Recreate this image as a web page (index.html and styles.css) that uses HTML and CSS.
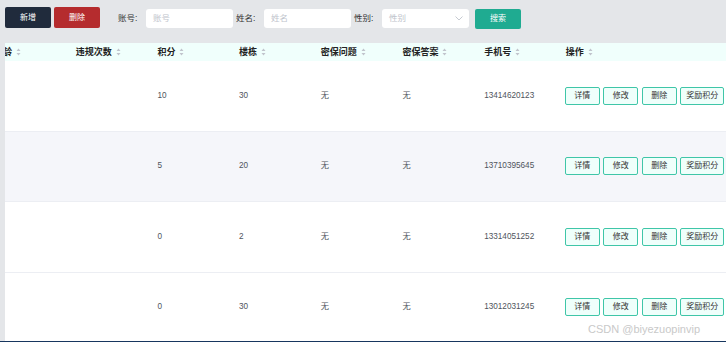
FILE: index.html
```html
<!DOCTYPE html>
<html lang="zh-CN">
<head>
<meta charset="utf-8">
<title>用户管理</title>
<link rel="stylesheet" href="styles.css">
</head>
<body>
<div class="page">
  <div class="toolbar">
    <button class="btn btn-dark">新增</button>
    <button class="btn btn-red">删除</button>
    <label class="field-label first">账号:</label>
    <div class="input"><span class="ph">账号</span></div>
    <label class="field-label">姓名:</label>
    <div class="input"><span class="ph">姓名</span></div>
    <label class="field-label">性别:</label>
    <div class="input select"><span class="ph">性别</span>
      <svg class="chev" width="8" height="5" viewBox="0 0 8 5"><path d="M0.5 0.5 L4 4 L7.5 0.5" fill="none" stroke="#c0c4cc" stroke-width="0.9"/></svg>
    </div>
    <button class="btn btn-teal">搜索</button>
  </div>

  <div class="table-wrap">
    <div class="table">
      <div class="row head">
        <div class="cell">年龄<svg class="sort" width="5" height="8" viewBox="0 0 5 8"><path d="M2.5 0.5 L4.5 3 L0.5 3 Z M2.5 7.5 L4.5 5 L0.5 5 Z" fill="#c0c4cc"/></svg></div>
        <div class="cell">违规次数<svg class="sort" width="5" height="8" viewBox="0 0 5 8"><path d="M2.5 0.5 L4.5 3 L0.5 3 Z M2.5 7.5 L4.5 5 L0.5 5 Z" fill="#c0c4cc"/></svg></div>
        <div class="cell">积分<svg class="sort" width="5" height="8" viewBox="0 0 5 8"><path d="M2.5 0.5 L4.5 3 L0.5 3 Z M2.5 7.5 L4.5 5 L0.5 5 Z" fill="#c0c4cc"/></svg></div>
        <div class="cell">楼栋<svg class="sort" width="5" height="8" viewBox="0 0 5 8"><path d="M2.5 0.5 L4.5 3 L0.5 3 Z M2.5 7.5 L4.5 5 L0.5 5 Z" fill="#c0c4cc"/></svg></div>
        <div class="cell">密保问题<svg class="sort" width="5" height="8" viewBox="0 0 5 8"><path d="M2.5 0.5 L4.5 3 L0.5 3 Z M2.5 7.5 L4.5 5 L0.5 5 Z" fill="#c0c4cc"/></svg></div>
        <div class="cell">密保答案<svg class="sort" width="5" height="8" viewBox="0 0 5 8"><path d="M2.5 0.5 L4.5 3 L0.5 3 Z M2.5 7.5 L4.5 5 L0.5 5 Z" fill="#c0c4cc"/></svg></div>
        <div class="cell">手机号<svg class="sort" width="5" height="8" viewBox="0 0 5 8"><path d="M2.5 0.5 L4.5 3 L0.5 3 Z M2.5 7.5 L4.5 5 L0.5 5 Z" fill="#c0c4cc"/></svg></div>
        <div class="cell">操作<svg class="sort" width="5" height="8" viewBox="0 0 5 8"><path d="M2.5 0.5 L4.5 3 L0.5 3 Z M2.5 7.5 L4.5 5 L0.5 5 Z" fill="#c0c4cc"/></svg></div>
      </div>

      <div class="row">
        <div class="cell"></div><div class="cell"></div>
        <div class="cell">10</div><div class="cell">30</div>
        <div class="cell">无</div><div class="cell">无</div>
        <div class="cell">13414620123</div>
        <div class="cell ops"><span class="op">详情</span><span class="op">修改</span><span class="op">删除</span><span class="op wide">奖励积分</span></div>
      </div>
      <div class="row alt">
        <div class="cell"></div><div class="cell"></div>
        <div class="cell">5</div><div class="cell">20</div>
        <div class="cell">无</div><div class="cell">无</div>
        <div class="cell">13710395645</div>
        <div class="cell ops"><span class="op">详情</span><span class="op">修改</span><span class="op">删除</span><span class="op wide">奖励积分</span></div>
      </div>
      <div class="row">
        <div class="cell"></div><div class="cell"></div>
        <div class="cell">0</div><div class="cell">2</div>
        <div class="cell">无</div><div class="cell">无</div>
        <div class="cell">13314051252</div>
        <div class="cell ops"><span class="op">详情</span><span class="op">修改</span><span class="op">删除</span><span class="op wide">奖励积分</span></div>
      </div>
      <div class="row">
        <div class="cell"></div><div class="cell"></div>
        <div class="cell">0</div><div class="cell">30</div>
        <div class="cell">无</div><div class="cell">无</div>
        <div class="cell">13012031245</div>
        <div class="cell ops"><span class="op">详情</span><span class="op">修改</span><span class="op">删除</span><span class="op wide">奖励积分</span></div>
      </div>
    </div>
  </div>

  <div class="watermark">CSDN @biyezuopinvip</div>
</div>
</body>
</html>
```

FILE: styles.css
```css
* { box-sizing: border-box; }

html, body {
  margin: 0;
  padding: 0;
}

body {
  font-family: "Liberation Sans", "Noto Sans CJK SC", sans-serif;
  color: #333;
}

.page {
  position: relative;
  width: 726px;
  height: 342px;
  overflow: hidden;
  background: #e4e6e9;
  border-bottom: 1px solid #17365f;
}

/* toolbar */
.toolbar {
  height: 43px;
  display: flex;
  align-items: flex-start;
  padding: 7px 0 0 5px;
}

.btn {
  border: none;
  border-radius: 2px;
  color: #fff;
  font-family: inherit;
  font-size: 8px;
  height: 21px;
  width: 46px;
  padding: 0;
  line-height: 21px;
}

.btn-dark { background: #202b3c; }
.btn-red { background: #b52c2e; margin-left: 3px; }
.btn-teal { background: #1fab91; margin-left: 6px; margin-top: 2px; height: 20px; line-height: 20px; }

.field-label {
  width: 28px;
  margin-left: 3px;
  margin-top: 2px;
  font-size: 8.5px;
  line-height: 19px;
  color: #333;
}

.field-label.first { margin-left: 18px; }

.input {
  width: 87px;
  height: 19px;
  margin-top: 2px;
  background: #fff;
  border-radius: 3px;
  padding-left: 7px;
  display: flex;
  align-items: center;
}

.ph {
  font-size: 8.5px;
  line-height: 1;
  color: #c0c4cc;
}

.select {
  justify-content: space-between;
  padding-right: 6px;
}

/* table */
.table-wrap {
  margin-left: 5px;
  background: #fff;
  height: 299px;
  overflow: hidden;
}

.table {
  margin-left: -21px;
  width: 760px;
}

.row {
  display: grid;
  grid-template-columns: repeat(7, 81.7px) 190px;
  height: 70.5px;
  align-items: center;
  border-bottom: 1px solid #eceef3;
  background: #fff;
}

.row.alt { background: #f5f6fa; }

.row.head {
  height: 18px;
  background: #f0fffc;
  border-bottom: none;
}

.cell {
  padding-left: 10px;
  font-size: 8.2px;
  line-height: 10px;
  color: #4f545c;
  white-space: nowrap;
  display: flex;
  align-items: center;
}

.head .cell {
  font-size: 9px;
  font-weight: bold;
  color: #222;
}

.sort { margin-left: 4px; }

.ops {
  padding-left: 9px;
  gap: 3.5px;
}

.op {
  width: 35px;
  height: 18px;
  border: 1px solid #3fc6a8;
  border-radius: 2px;
  background: #effffb;
  color: #333;
  font-size: 8px;
  line-height: 1;
  display: flex;
  align-items: center;
  justify-content: center;
}

.op.wide { width: 44px; }

.watermark {
  position: absolute;
  left: 588px;
  top: 323px;
  font-size: 11px;
  color: #c9c9c9;
}
```
